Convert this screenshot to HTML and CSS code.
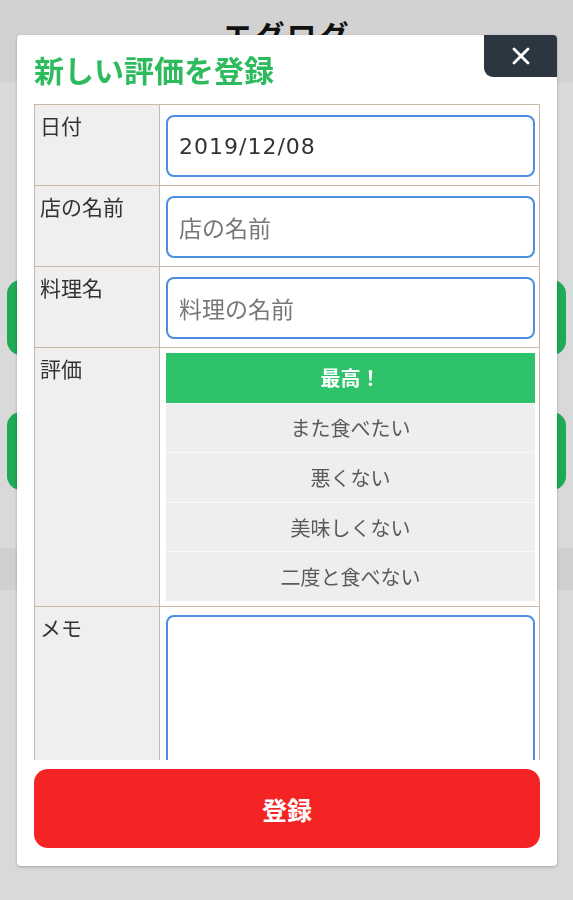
FILE: index.html
```html
<!DOCTYPE html>
<html lang="ja">
<head>
<meta charset="utf-8">
<title>エグログ</title>
<link rel="stylesheet" href="styles.css">
</head>
<body>
<div class="page">
  <header class="site-header"><h1 class="site-title">エグログ</h1></header>
  <div class="page-gap"></div>
  <div class="green-row"></div>
  <div class="green-gap"></div>
  <div class="green-row second"></div>
  <div class="band-gap"></div>
  <div class="band"></div>
</div>

<div class="modal">
  <button class="close-btn" type="button" aria-label="閉じる">
    <svg width="20" height="20" viewBox="0 0 20 20"><path d="M3 3 L17 17 M17 3 L3 17" stroke="#fff" stroke-width="2.8" stroke-linecap="round"/></svg>
  </button>
  <h2 class="modal-title">新しい評価を登録</h2>
  <div class="scroll">
    <table class="form-table">
      <tr class="row-input">
        <th>日付</th>
        <td><div class="field value">2019/12/08</div></td>
      </tr>
      <tr class="row-input">
        <th>店の名前</th>
        <td><div class="field placeholder">店の名前</div></td>
      </tr>
      <tr class="row-input">
        <th>料理名</th>
        <td><div class="field placeholder">料理の名前</div></td>
      </tr>
      <tr class="row-rating">
        <th>評価</th>
        <td>
          <ul class="rating">
            <li class="selected">最高！</li>
            <li>また食べたい</li>
            <li>悪くない</li>
            <li>美味しくない</li>
            <li>二度と食べない</li>
          </ul>
        </td>
      </tr>
      <tr class="row-memo">
        <th>メモ</th>
        <td><div class="memo"></div></td>
      </tr>
    </table>
  </div>
  <button class="submit" type="button">登録</button>
</div>
</body>
</html>
```

FILE: styles.css
```css
* { box-sizing: border-box; }
html, body { margin: 0; padding: 0; }
body {
  background: #d9d9d9;
  font-family: "DejaVu Sans", "Noto Sans CJK JP", sans-serif;
  width: 573px;
  height: 900px;
  overflow: hidden;
}
.page { display: flex; flex-direction: column; }
.site-header {
  height: 82px;
  background: #d2d2d2;
  display: flex;
  justify-content: center;
}
.site-title {
  margin: 14px 0 0;
  font-family: "Noto Sans CJK JP", sans-serif;
  font-size: 30px;
  font-weight: 700;
  color: #111;
  letter-spacing: 2px;
  line-height: 40px;
}
.page-gap { height: 198px; }
.green-row {
  margin: 0 7px;
  height: 75px;
  background: #1faa55;
  border-radius: 14px;
}
.green-gap { height: 57px; }
.green-row.second { height: 78px; }
.band-gap { height: 58px; }
.band { height: 42px; background: #d0d0d0; }

.modal {
  position: fixed;
  left: 17px;
  top: 35px;
  width: 540px;
  height: 831px;
  background: #fff;
  border-radius: 4px;
  box-shadow: 0 1px 3px rgba(0,0,0,0.25);
  display: flex;
  flex-direction: column;
  padding: 0 17px 18px;
}
.close-btn {
  position: absolute;
  right: 0;
  top: 0;
  width: 73px;
  height: 42px;
  border: 0;
  background: #2c3640;
  border-radius: 0 4px 0 9px;
  display: flex;
  align-items: center;
  justify-content: center;
  padding: 0;
}
.modal-title {
  margin: 0;
  height: 69px;
  padding-top: 15px;
  font-family: "Noto Sans CJK JP", sans-serif;
  font-size: 30px;
  line-height: 38px;
  font-weight: 700;
  color: #2dbb5e;
}
.scroll {
  height: 656px;
  overflow: hidden;
}
.form-table {
  width: 506px;
  border-collapse: collapse;
  border: 1px solid #c9b9aa;
}
.form-table th, .form-table td {
  border: 1px solid #c9b9aa;
  vertical-align: top;
}
.form-table th {
  width: 125px;
  background: #efefef;
  text-align: left;
  font-family: "Noto Sans CJK JP", sans-serif;
  font-weight: 400;
  font-size: 21px;
  line-height: 28px;
  color: #333;
  padding: 6px 5px;
}
.form-table td {
  background: #fff;
  padding: 10px 4px 8px 6px;
}
.row-input th { height: 81px; }
.field {
  height: 62px;
  border: 2px solid #4a8fe0;
  border-radius: 8px;
  padding: 0 11px;
  display: flex;
  align-items: center;
  font-size: 22px;
  font-family: "DejaVu Sans", "Noto Sans CJK JP", sans-serif;
}
.field.value { color: #333; letter-spacing: 1px; }
.field.placeholder { color: #777; font-family: "Noto Sans CJK JP", sans-serif; font-size: 23px; }
.row-rating td { padding-top: 5px; padding-bottom: 5px; }
.rating {
  list-style: none;
  margin: 0;
  padding: 0;
  display: flex;
  flex-direction: column;
}
.rating li {
  height: 49.6px;
  display: flex;
  align-items: center;
  justify-content: center;
  background: #eeeeee;
  border-top: 1px solid #f8f8f8;
  font-family: "Noto Sans CJK JP", sans-serif;
  font-size: 20px;
  color: #5a5a5a;
}
.rating li.selected {
  background: #2ec36b;
  color: #fff;
  font-weight: 700;
  border-top: 0;
}
.row-memo td { padding-top: 8px; }
.memo {
  height: 200px;
  border: 2px solid #4a8fe0;
  border-radius: 8px;
}
.submit {
  margin-top: 9px;
  height: 79px;
  width: 506px;
  border: 0;
  border-radius: 14px;
  background: #f52424;
  color: #fff;
  font-family: "Noto Sans CJK JP", sans-serif;
  font-size: 25px;
  font-weight: 700;
}
```
